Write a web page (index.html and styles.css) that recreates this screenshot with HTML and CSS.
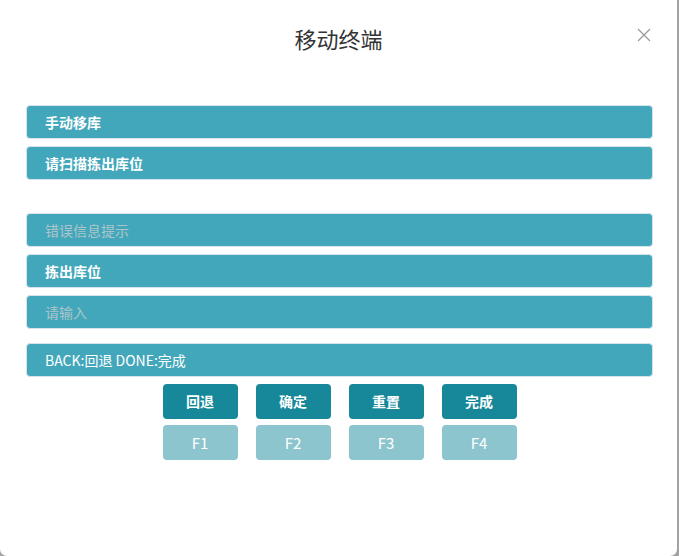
FILE: index.html
```html
<!DOCTYPE html>
<html lang="zh-CN">
<head>
<meta charset="utf-8">
<title>移动终端</title>
<link rel="stylesheet" href="styles.css">
</head>
<body>
<div class="dialog">
  <div class="header">
    <h1 class="title">移动终端</h1>
    <span class="close">
      <svg width="14" height="14" viewBox="0 0 14 14"><path d="M1 1 L13 13 M13 1 L1 13" stroke="#9a9a9a" stroke-width="1.3" fill="none"/></svg>
    </span>
  </div>
  <div class="body">
    <div class="group">
      <div class="bar">手动移库</div>
      <div class="bar">请扫描拣出库位</div>
    </div>
    <div class="group second">
      <div class="bar placeholder">错误信息提示</div>
      <div class="bar">拣出库位</div>
      <div class="bar placeholder">请输入</div>
    </div>
    <div class="bar hint">BACK:回退 DONE:完成</div>
    <div class="buttons">
      <span class="btn primary">回退</span>
      <span class="btn primary">确定</span>
      <span class="btn primary">重置</span>
      <span class="btn primary">完成</span>
      <span class="btn light">F1</span>
      <span class="btn light">F2</span>
      <span class="btn light">F3</span>
      <span class="btn light">F4</span>
    </div>
  </div>
</div>
</body>
</html>
```
FILE: styles.css
```css
html, body {
  margin: 0;
  padding: 0;
  height: 100%;
}
body {
  background: #a3a3a3;
  font-family: "Microsoft YaHei", "Noto Sans CJK SC", "Liberation Sans", sans-serif;
  overflow: hidden;
}
.dialog {
  width: 677px;
  height: 556px;
  background: #ffffff;
  border-radius: 0 0 7px 7px;
  box-sizing: border-box;
}
.header {
  position: relative;
  height: 80px;
  display: flex;
  justify-content: center;
  align-items: flex-start;
}
.title {
  margin: 22px 0 0 0;
  font-size: 22px;
  font-weight: normal;
  color: #333333;
  line-height: 32px;
}
.close {
  position: absolute;
  right: 26px;
  top: 28px;
  width: 14px;
  height: 14px;
  display: block;
}
.close svg { display: block; }
.body {
  padding: 25px 24px 0 26px;
  display: flex;
  flex-direction: column;
}
.group {
  display: flex;
  flex-direction: column;
  gap: 7px;
}
.second {
  margin-top: 33px;
}
.bar {
  height: 34px;
  box-sizing: border-box;
  background: #43a7bb;
  border: 1px solid #d6e3e8;
  border-radius: 4px;
  color: #ffffff;
  font-size: 14px;
  font-weight: bold;
  line-height: 32px;
  padding-left: 18px;
}
.placeholder {
  color: #adc5ca;
  font-weight: normal;
}
.hint {
  margin-top: 14px;
  font-weight: normal;
  font-size: 14px;
}
.buttons {
  margin: 7px auto 0;
  display: grid;
  grid-template-columns: repeat(4, 75px);
  column-gap: 18px;
  row-gap: 6px;
}
.btn {
  height: 35px;
  border-radius: 4px;
  color: #ffffff;
  font-size: 14px;
  line-height: 35px;
  text-align: center;
}
.primary {
  background: #17879a;
  font-weight: bold;
}
.light {
  background: #8cc5ce;
  font-size: 15px;
}
```
